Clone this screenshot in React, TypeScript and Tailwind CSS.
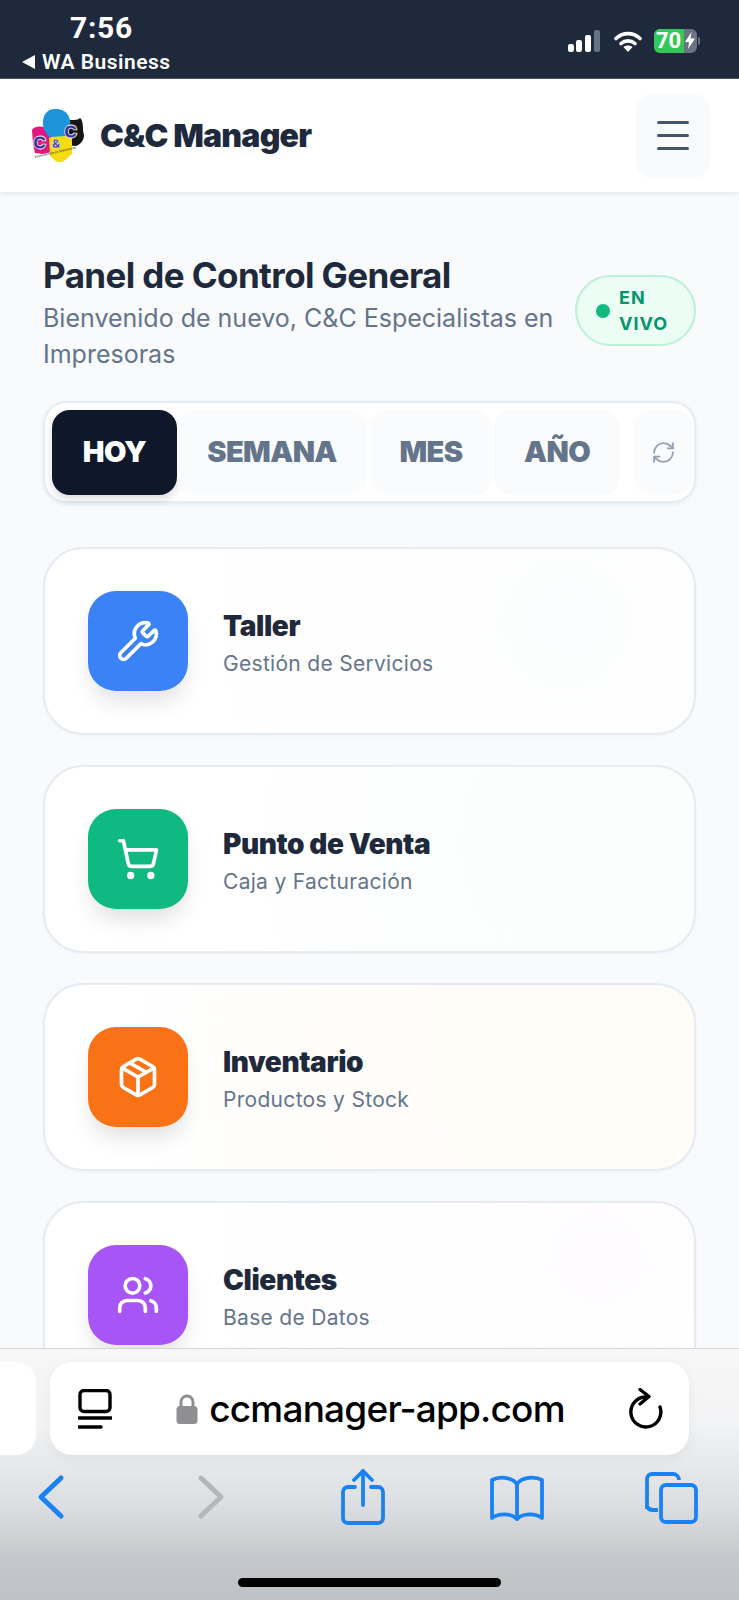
import React from "react";
import { Wrench, ShoppingCart, Package, Users, RefreshCw } from "lucide-react";

const inter = { fontFamily: "Inter, sans-serif" };

function Logo() {
  return (
    <svg width="56" height="56" viewBox="0 0 56 56" className="shrink-0">
      <path d="M2 22 C6 17 14 18 20 22 L24 34 L21 44 L13 46 L5 45 L3 36 Z" fill="#e0187f" />
      <path d="M33 14 C37 10 46 14 50 10 C54 13 52 20 54 27 C54 32 51 36 46 38 L33 37 L31 26 Z" fill="#141414" />
      <path d="M19 30 C26 26 36 26 42 30 L42 46 C38 48 36 54 30 54 C26 55 23 50 20 48 Z" fill="#f6dc12" />
      <path d="M18 3 C25 -1 36 1 39 9 C42 16 40 24 35 28 L20 29 C12 24 10 9 18 3 Z" fill="#1d93dc" />
      <text x="3" y="41" fontSize="18" fontWeight="900" fill="#3730a3" stroke="#e5e7eb" strokeWidth="0.8" style={inter}>C</text>
      <text x="22" y="40" fontSize="12" fontWeight="900" fill="#3730a3" stroke="#e5e7eb" strokeWidth="0.5" style={inter}>&amp;</text>
      <text x="34" y="30" fontSize="18" fontWeight="900" fill="#3730a3" stroke="#e5e7eb" strokeWidth="0.8" style={inter}>C</text>
      <text x="5" y="50" fontSize="3.2" fill="#222" transform="rotate(-13 5 50)" style={inter}>Especialistas en Impresoras</text>
    </svg>
  );
}

function Card({ color, tint, icon, title, sub }: { color: string; tint: string; icon: React.ReactNode; title: string; sub: string }) {
  return (
    <div className={`flex h-[188px] shrink-0 items-center gap-[35px] rounded-[40px] border-2 border-[#e6ebf2] px-[43px] shadow-[0_1px_3px_rgba(15,23,42,0.04)] ${tint}`}>
      <div className={`flex h-[100px] w-[100px] shrink-0 items-center justify-center rounded-[28px] text-white shadow-[0_14px_22px_-4px_rgba(0,0,0,0.12)] ${color}`}>
        {icon}
      </div>
      <div className="flex flex-col pt-[6px]">
        <div className="text-[28px] leading-[36px] font-black tracking-[-0.4px] text-[#1e293b]">{title}</div>
        <div className="mt-[4px] text-[21px] leading-[32px] tracking-[0.3px] text-[#64748b]">{sub}</div>
      </div>
    </div>
  );
}

function Tab({ label, className }: { label: string; className: string }) {
  return (
    <div className={`flex h-[85px] items-center justify-center rounded-[18px] bg-[#fafbfc] text-[29px] font-black tracking-[-0.6px] text-[#64748b] ${className}`}>
      {label}
    </div>
  );
}

function StatusBar() {
  return (
    <div className="flex h-[79px] shrink-0 items-start justify-between border-b border-[#475569] bg-[#1e293b] pr-[39px] pl-[22px] text-white" style={{ fontFamily: "Roboto, Inter, sans-serif" }}>
      <div className="flex flex-col">
        <div className="pt-[11px] pl-[48px] text-[30px] leading-[34px] font-bold tracking-[0.7px]">7:56</div>
        <div className="flex items-center gap-[7px] pt-[5px] text-[21px] leading-[24px] font-semibold tracking-[0.5px]">
          <svg width="13" height="14" viewBox="0 0 13 14"><path d="M13 0 V14 L0 7 Z" fill="#fff" /></svg>
          WA Business
        </div>
      </div>
      <div className="flex items-center pt-[29px]">
        <svg className="mr-[14px]" width="32" height="22" viewBox="0 0 32 22">
          <rect x="0" y="14" width="6" height="8" rx="2" fill="#fff" />
          <rect x="8" y="10" width="6" height="12" rx="2" fill="#fff" />
          <rect x="17" y="5" width="6" height="17" rx="2" fill="#fff" />
          <rect x="26" y="0" width="6" height="22" rx="2" fill="#64748b" />
        </svg>
        <svg className="mr-[12px]" width="28" height="21" viewBox="0 0 28 21" fill="none">
          <path d="M2 7.5 C9 1 19 1 26 7.5" stroke="#fff" strokeWidth="3.6" strokeLinecap="round" />
          <path d="M7 12.5 C11 9 17 9 21 12.5" stroke="#fff" strokeWidth="3.6" strokeLinecap="round" />
          <path d="M14 21 L9.5 16 C12 14 16 14 18.5 16 Z" fill="#fff" />
        </svg>
        <div className="flex items-center">
          <div className="relative flex h-[24px] w-[43px] rounded-[6px] bg-[#6b7280]">
            <div className="flex h-full w-[30px] items-center rounded-l-[6px] bg-[#34c759] pl-[2px] text-[22px] leading-[24px] font-bold tracking-[-0.2px]">70</div>
            <svg className="mt-[3px] ml-[1px]" width="10" height="17" viewBox="0 0 10 17"><path d="M6.5 0 L0 10 H4 L3 17 L10 6.5 H5.5 Z" fill="#fff" /></svg>
          </div>
          <div className="ml-[1px] h-[8px] w-[2px] rounded-r bg-[#6b7280]" />
        </div>
      </div>
    </div>
  );
}

function SafariBar() {
  return (
    <div className="absolute right-0 bottom-0 left-0 h-[252px] border-t border-[#d4d4d8] bg-[linear-gradient(180deg,#f7f7f8_0%,#f2f3f4_30%,#dcdee1_62%,#c4c6cb_85%,#bfc2c7_100%)]">
      <div className="absolute top-[13px] left-0 h-[93px] w-[36px] rounded-r-[20px] bg-white" />
      <div className="absolute top-[13px] left-[50px] flex h-[93px] w-[639px] items-center justify-between rounded-[22px] bg-white pr-[26px] pl-[28px] shadow-[0_4px_14px_rgba(0,0,0,0.05)]">
        <svg width="34" height="40" viewBox="0 0 34 40" fill="none" stroke="#000">
          <rect x="2" y="1.5" width="30" height="21" rx="4" strokeWidth="3.4" />
          <path d="M1 29 H33" strokeWidth="3.4" strokeLinecap="round" />
          <path d="M1 38 H23" strokeWidth="3.4" strokeLinecap="round" />
        </svg>
        <div className="flex items-center gap-[11px]">
          <svg width="22" height="30" viewBox="0 0 22 30"><path d="M5 13 V8 a6 6 0 0 1 12 0 V13" fill="none" stroke="#8e8e93" strokeWidth="3" /><rect x="0.5" y="12" width="21" height="18" rx="3.5" fill="#8e8e93" /></svg>
          <span className="text-[37px] leading-[44px] font-medium tracking-[-0.8px] text-black" style={{ fontFamily: "Inter, sans-serif" }}>ccmanager-app.com</span>
        </div>
        <svg width="34" height="42" viewBox="0 0 34 42" fill="none" stroke="#000" strokeWidth="3.4" strokeLinecap="round" strokeLinejoin="round">
          <path d="M17 9 A15 15 0 1 0 31 19" />
          <path d="M11 1.5 L20 8.5 L11 16" />
        </svg>
      </div>
      <svg className="absolute top-[125px] left-[36px]" width="30" height="46" viewBox="0 0 30 46" fill="none" stroke="#1a82f7" strokeWidth="5" strokeLinecap="round" strokeLinejoin="round"><path d="M25 4 L5 23 L25 42" /></svg>
      <svg className="absolute top-[125px] left-[196px]" width="30" height="46" viewBox="0 0 30 46" fill="none" stroke="#b4b6ba" strokeWidth="5" strokeLinecap="round" strokeLinejoin="round"><path d="M5 4 L25 23 L5 42" /></svg>
      <svg className="absolute top-[120px] left-[341px]" width="44" height="56" viewBox="0 0 44 56" fill="none" stroke="#1a82f7" strokeWidth="3.8" strokeLinecap="round" strokeLinejoin="round">
        <path d="M14 18 H7 a5 5 0 0 0 -5 5 V49 a5 5 0 0 0 5 5 H37 a5 5 0 0 0 5 -5 V23 a5 5 0 0 0 -5 -5 H30" />
        <path d="M22 36 V2" />
        <path d="M13 11 L22 2 L31 11" />
      </svg>
      <svg className="absolute top-[126px] left-[489px]" width="56" height="46" viewBox="0 0 56 46" fill="none" stroke="#1a82f7" strokeWidth="3.8" strokeLinecap="round" strokeLinejoin="round">
        <path d="M28 9 C23 2 10 1 3 5 V43 C10 38 22 38 28 44 C34 38 46 38 53 43 V5 C46 1 33 2 28 9 Z" />
        <path d="M28 9 V44" />
      </svg>
      <svg className="absolute top-[123px] left-[645px]" width="53" height="52" viewBox="0 0 53 52" fill="none" stroke="#1a82f7" strokeWidth="3.8" strokeLinejoin="round">
        <path d="M2 37 V7 a5 5 0 0 1 5 -5 H28 a6 6 0 0 1 6 6 M13 38 H8 a6 6 0 0 1 -6 -4" />
        <rect x="16" y="13" width="35" height="37" rx="5" />
      </svg>
      <div className="absolute top-[229px] left-[238px] h-[9px] w-[263px] rounded-full bg-black" />
    </div>
  );
}

export default function App() {
  return (
    <div className="relative flex h-[1600px] w-[739px] flex-col overflow-hidden bg-[#f8fafc]" style={inter}>
      <StatusBar />
      <header className="flex h-[113px] shrink-0 items-center justify-between bg-white pr-[29px] pl-[30px] shadow-[0_2px_4px_rgba(15,23,42,0.08)]">
        <div className="flex items-center gap-[14px]">
          <Logo />
          <span className="text-[32px] font-black tracking-[-0.8px] text-[#1e293b]">C&amp;C Manager</span>
        </div>
        <div className="flex h-[84px] w-[74px] flex-col items-center justify-center gap-[9.5px] rounded-[16px] bg-[#f9fafb]">
          <div className="h-[3.5px] w-[32px] rounded-full bg-[#475569]" />
          <div className="h-[3.5px] w-[32px] rounded-full bg-[#475569]" />
          <div className="h-[3.5px] w-[32px] rounded-full bg-[#475569]" />
        </div>
      </header>
      <main className="flex flex-col px-[43px]">
        <div className="flex items-start justify-between pt-[62px]">
          <div className="w-[520px]">
            <div className="text-[35px] leading-[42px] font-bold tracking-[-0.6px] text-[#1e293b]">Panel de Control General</div>
            <div className="mt-[4px] text-[25px] leading-[36px] text-[#64748b]">Bienvenido de nuevo, C&amp;C Especialistas en Impresoras</div>
          </div>
          <div className="mt-[21px] flex h-[71px] w-[121px] items-center gap-[9px] rounded-[36px] border-2 border-[#bbf0d8] bg-[#ecfdf5] pl-[19px]">
            <div className="h-[14px] w-[14px] shrink-0 rounded-full bg-[#10b981]" />
            <div className="text-[18px] leading-[26px] font-bold tracking-[1px] text-[#059669]">EN<br />VIVO</div>
          </div>
        </div>
        <div className="mt-[29px] flex h-[102px] items-center rounded-[24px] border-2 border-[#e8edf3] bg-white pl-[7px] shadow-[0_1px_4px_rgba(15,23,42,0.08)]">
          <div className="flex h-[85px] w-[125px] items-center justify-center rounded-[18px] bg-[#0f172a] text-[29px] font-black tracking-[-0.6px] text-white shadow-[0_4px_8px_rgba(15,23,42,0.15)]">HOY</div>
          <Tab label="SEMANA" className="w-[190px]" />
          <Tab label="MES" className="ml-[3px] w-[122px]" />
          <Tab label="AÑO" className="ml-[2px] w-[126px]" />
          <div className="ml-[14px] flex h-[85px] w-[58px] items-center justify-center rounded-[18px] bg-[#fafbfc] text-[#94a3b8]">
            <RefreshCw size={25} strokeWidth={1.8} />
          </div>
        </div>
        <div className="mt-[44px] flex flex-col gap-[30px]">
          <Card color="bg-[#3b82f6]" tint="bg-[radial-gradient(circle_at_80%_40%,#fcfdfe_0%,#ffffff_70%)]" icon={<Wrench size={44} strokeWidth={2} />} title="Taller" sub="Gestión de Servicios" />
          <Card color="bg-[#10b981]" tint="bg-[radial-gradient(circle_at_85%_40%,#fafefc_0%,#ffffff_70%)]" icon={<ShoppingCart size={44} strokeWidth={2} />} title="Punto de Venta" sub="Caja y Facturación" />
          <Card color="bg-[#f97316]" tint="bg-[radial-gradient(circle_at_85%_40%,#fffbf5_0%,#ffffff_85%)]" icon={<Package size={44} strokeWidth={2} />} title="Inventario" sub="Productos y Stock" />
          <Card color="bg-[#a855f7]" tint="bg-[radial-gradient(circle_at_85%_30%,#fefcff_0%,#ffffff_70%)]" icon={<Users size={44} strokeWidth={2} />} title="Clientes" sub="Base de Datos" />
        </div>
      </main>
      <SafariBar />
    </div>
  );
}
